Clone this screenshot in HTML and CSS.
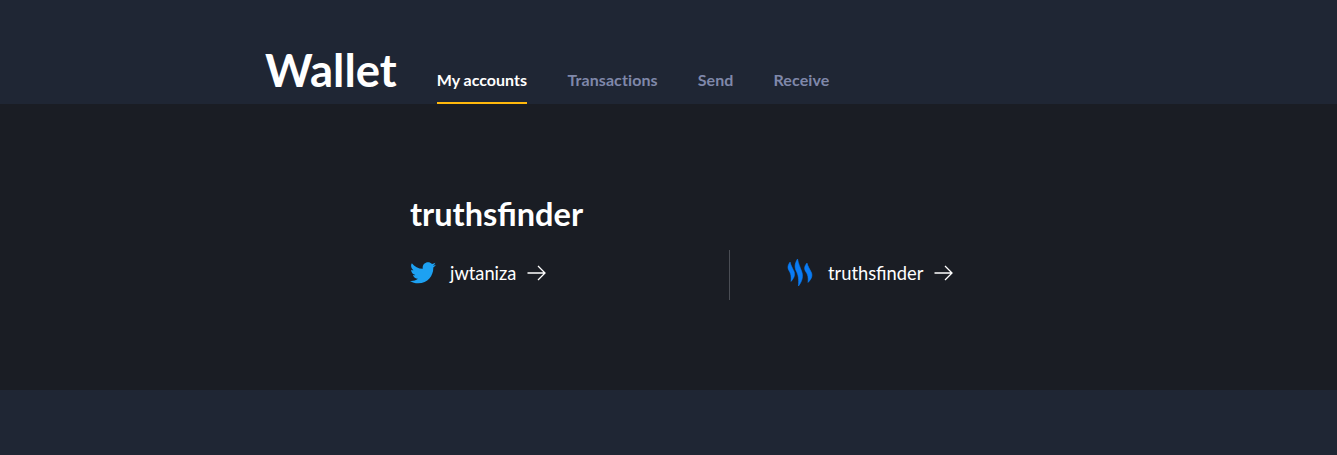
FILE: index.html
```html
<!DOCTYPE html>
<html lang="en">
<head>
    <meta charset="UTF-8">
    <title>Wallet</title>
    <link rel="stylesheet" href="styles.css">
</head>
<body>

<header class="top">
    <h1>Wallet</h1>
    <nav class="tabs">
        <a class="tab active" href="#">My accounts</a>
        <a class="tab" href="#">Transactions</a>
        <a class="tab" href="#">Send</a>
        <a class="tab" href="#">Receive</a>
    </nav>
</header>

<main class="content">
    <h2>truthsfinder</h2>
    <div class="accounts">
        <a class="account first" href="#">
            <svg class="icon" width="26" height="22" viewBox="0 0 24 20" fill="#1da1f2">
                <path d="M24 2.4c-.9.4-1.8.7-2.8.8 1-.6 1.8-1.6 2.2-2.7-1 .6-2 1-3.100 1.200C19.300.7 18 .1 16.600.1c-2.700 0-4.900 2.200-4.900 4.900 0 .4 0 .8.100 1.100C7.700 5.900 4.100 4 1.700.9 1.200 1.600 1 2.500 1 3.400c0 1.700.9 3.200 2.200 4.100-.8 0-1.600-.2-2.200-.6v.1c0 2.400 1.700 4.400 3.900 4.800-.4.100-.8.200-1.300.2-.3 0-.6 0-.9-.1.600 2 2.400 3.400 4.600 3.400-1.700 1.300-3.800 2.100-6.100 2.100-.4 0-.8 0-1.200-.1 2.200 1.400 4.800 2.200 7.500 2.200 9.100 0 14-7.500 14-14v-.6c1-.7 1.800-1.600 2.500-2.500z"/>
            </svg>
            <span>jwtaniza</span>
            <svg class="arrow" width="20" height="16" viewBox="0 0 20 16" fill="none" stroke="#fff" stroke-width="1.300">
                <path d="M1.500 8h17M12 1l7 7-7 7"/>
            </svg>
        </a>
        <a class="account second" href="#">
            <svg class="icon steem" width="27" height="28" viewBox="0 0 27 28" fill="#0a7cf5" stroke="#0a7cf5" stroke-width=".6">
                <path transform="translate(-5 3) scale(.9 .72)" d="M9 0C6 5 6 8.500 8 12.500c1.800 3.500 2.500 7.500 2 14.500 3.800-5 5-10 3-15C11.500 8 10 5 9 0z"/>
                <path transform="translate(1.500 0)" d="M9 0C6 5 6 8.500 8 12.500c1.800 3.500 2.500 7.500 2 14.500 3.800-5 5-10 3-15C11.500 8 10 5 9 0z"/>
                <path transform="translate(11 4) scale(1 .72)" d="M9 0C6 5 6 8.500 8 12.500c1.800 3.500 2.500 7.500 2 14.500 3.800-5 5-10 3-15C11.500 8 10 5 9 0z"/>
            </svg>
            <span>truthsfinder</span>
            <svg class="arrow" width="20" height="16" viewBox="0 0 20 16" fill="none" stroke="#fff" stroke-width="1.300">
                <path d="M1.500 8h17M12 1l7 7-7 7"/>
            </svg>
        </a>
    </div>
</main>

</body>
</html>
```

FILE: styles.css
```css
html, body {
    height: 100%;
}
body {
    margin: 0;
    background: #1f2634;
    color: #fff;
    font-family: 'Lato', sans-serif;
}
a {
    color: inherit;
    text-decoration: none;
}
.top {
    height: 104px;
    box-sizing: border-box;
    padding-left: 265px;
    display: flex;
    align-items: flex-end;
}
.top h1 {
    margin: 0 40px 8px 0;
    font-size: 45.5px;
    line-height: 53px;
    font-weight: 700;
}
.tabs {
    display: flex;
    gap: 40px;
}
.tab {
    height: 48px;
    box-sizing: border-box;
    padding-top: 15px;
    font-size: 16px;
    letter-spacing: .1px;
    line-height: 18px;
    font-weight: 700;
    color: #7f88aa;
    border-bottom: 2px solid transparent;
}
.tab.active {
    margin-right: .4px;
    letter-spacing: 0;
    color: #fff;
    border-bottom-color: #ffb80c;
}
.content {
    height: 286px;
    box-sizing: border-box;
    padding: 91px 0 0 410px;
    background: #1a1d24;
}
.content h2 {
    margin: 0 0 17px;
    font-size: 32.5px;
    line-height: 38px;
    font-weight: 700;
}
.accounts {
    display: flex;
}
.account {
    height: 50px;
    box-sizing: border-box;
    padding-bottom: 4px;
    display: flex;
    align-items: center;
    font-size: 18.3px;
}
.account.first {
    width: 320px;
    border-right: 1px solid #4a4d54;
}
.account.second {
    margin-left: 57px;
}
.icon {
    margin-right: 14px;
}
.arrow {
    margin-left: 10px;
}
```
